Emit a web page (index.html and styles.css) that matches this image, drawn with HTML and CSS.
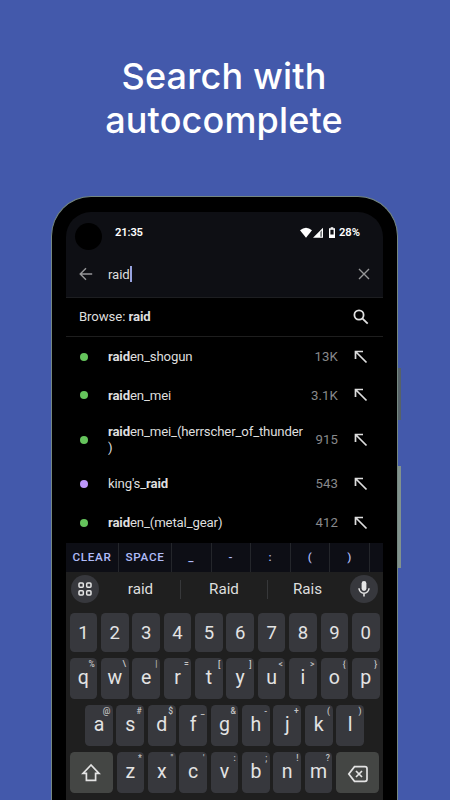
FILE: index.html
```html
<!DOCTYPE html>
<html lang="en">
<head>
<meta charset="utf-8">
<title>Search with autocomplete</title>
<link rel="stylesheet" href="styles.css">
</head>
<body>
<h1>Search with<br>autocomplete</h1>
<div class="phone">
  <i class="side power"></i><i class="side volume"></i>
  <main class="screen">
    <i class="camera"></i>
    <div class="status">
      <span class="time">21:35</span>
      <svg class="signals" width="38" height="12" viewBox="0 0 38 12"><path fill="#fff" d="M0 3.3Q6-1.7 12 3.3L6 10.7z"/><path fill="#fff" d="M13 10.7 23 .8v9.9z"/><path fill="#777a7d" d="M20.2 4.9 22 3.2v6.5h-1.8z"/><path fill="none" stroke="#fff" stroke-width="1.4" d="M29.7 2h4.6v8.3h-4.6z"/><path fill="#fff" d="M30.7.2h2.6v1.6h-2.6zM29.5 7.4h5v3h-5z"/></svg>
      <span class="battery">28%</span>
    </div>
    <div class="search">
      <svg class="back" width="14" height="14" viewBox="0 0 14 14"><path d="M13.2 7H1.3M7 1.2 1.2 7 7 12.8"/></svg>
      <span class="query">raid</span><i class="caret"></i>
      <svg class="clear" width="12" height="12" viewBox="0 0 12 12"><path d="m1 1 10 10M11 1 1 11"/></svg>
    </div>
    <div class="browse">
      <span>Browse: <b>raid</b></span>
      <svg width="16" height="16" viewBox="0 0 16 16"><circle cx="6" cy="6" r="4.6"/><path d="m9.3 9.3 5.4 5.4"/></svg>
    </div>
    <div class="results">
      <div class="row"><i class="dot"></i><span class="tag"><b>raid</b>en_shogun</span><span class="count">13K</span><svg class="arrow" width="14" height="14" viewBox="0 0 14 14"><path d="M1.5 9V1.5H9M1.5 1.5l11 11"/></svg></div>
      <div class="row"><i class="dot"></i><span class="tag"><b>raid</b>en_mei</span><span class="count">3.1K</span><svg class="arrow" width="14" height="14" viewBox="0 0 14 14"><path d="M1.5 9V1.5H9M1.5 1.5l11 11"/></svg></div>
      <div class="row tall"><i class="dot"></i><span class="tag"><b>raid</b>en_mei_(herrscher_of_thunder<br>)</span><span class="count">915</span><svg class="arrow" width="14" height="14" viewBox="0 0 14 14"><path d="M1.5 9V1.5H9M1.5 1.5l11 11"/></svg></div>
      <div class="row"><i class="dot purple"></i><span class="tag">king's_<b>raid</b></span><span class="count">543</span><svg class="arrow" width="14" height="14" viewBox="0 0 14 14"><path d="M1.5 9V1.5H9M1.5 1.5l11 11"/></svg></div>
      <div class="row"><i class="dot"></i><span class="tag"><b>raid</b>en_(metal_gear)</span><span class="count">412</span><svg class="arrow" width="14" height="14" viewBox="0 0 14 14"><path d="M1.5 9V1.5H9M1.5 1.5l11 11"/></svg></div>
    </div>
    <div class="tools"><span>CLEAR</span><span>SPACE</span><span>_</span><span>-</span><span>:</span><span>(</span><span>)</span><span></span></div>
    <div class="keyboard">
      <div class="suggest">
        <i class="round"><svg width="14" height="14" viewBox="0 0 14 14" fill="none" stroke="#e6e6e6" stroke-width="1.5"><rect x="1" y="1" width="4.3" height="4.3" rx="1"/><rect x="8.7" y="1" width="4.3" height="4.3" rx="1"/><rect x="1" y="8.7" width="4.3" height="4.3" rx="1"/><rect x="8.7" y="8.7" width="4.3" height="4.3" rx="1"/></svg></i>
        <span>raid</span><span>Raid</span><span>Rais</span>
        <i class="round"><svg width="14" height="18" viewBox="0 0 14 18"><rect x="4.6" y="1" width="4.8" height="10" rx="2.4" fill="#e6e6e6"/><path d="M2 8.3a5 5 0 0 0 10 0M7 13.3v3.2" fill="none" stroke="#e6e6e6" stroke-width="1.5"/></svg></i>
      </div>
      <div class="keys digits"><kbd>1</kbd><kbd>2</kbd><kbd>3</kbd><kbd>4</kbd><kbd>5</kbd><kbd>6</kbd><kbd>7</kbd><kbd>8</kbd><kbd>9</kbd><kbd>0</kbd></div>
      <div class="keys"><kbd>q<sup>%</sup></kbd><kbd>w<sup>\</sup></kbd><kbd>e<sup>|</sup></kbd><kbd>r<sup>=</sup></kbd><kbd>t<sup>[</sup></kbd><kbd>y<sup>]</sup></kbd><kbd>u<sup>&lt;</sup></kbd><kbd>i<sup>&gt;</sup></kbd><kbd>o<sup>{</sup></kbd><kbd>p<sup>}</sup></kbd></div>
      <div class="keys middle"><kbd>a<sup>@</sup></kbd><kbd>s<sup>#</sup></kbd><kbd>d<sup>$</sup></kbd><kbd>f<sup>_</sup></kbd><kbd>g<sup>&amp;</sup></kbd><kbd>h<sup>-</sup></kbd><kbd>j<sup>+</sup></kbd><kbd>k<sup>(</sup></kbd><kbd>l<sup>)</sup></kbd></div>
      <div class="keys">
        <kbd class="wide"><svg width="20" height="20" viewBox="0 0 20 20"><path d="M10 2 2 10.4h3.4v7h9.2v-7H18z"/></svg></kbd><kbd>z<sup>*</sup></kbd><kbd>x<sup>"</sup></kbd><kbd>c<sup>'</sup></kbd><kbd>v<sup>:</sup></kbd><kbd>b<sup>;</sup></kbd><kbd>n<sup>!</sup></kbd><kbd>m<sup>?</sup></kbd><kbd class="wide"><svg width="22" height="18" viewBox="0 0 22 18"><path d="M7.5 1.7H18a2 2 0 0 1 2 2v10.6a2 2 0 0 1-2 2H7.5L1.8 9zM9 6l6 6M15 6l-6 6"/></svg></kbd>
      </div>
      <div class="keys bottom"><kbd class="wide"></kbd><kbd></kbd><kbd></kbd><kbd class="spacebar"></kbd><kbd></kbd><kbd class="wide"></kbd></div>
    </div>
  </main>
</div>
</body>
</html>
```
FILE: styles.css
```css
* { box-sizing: border-box; }
html { height: 800px; overflow: hidden; }
body {
  margin: 0;
  height: 800px;
  overflow: hidden;
  background: #4359ab;
  font-family: Roboto, sans-serif;
  color: #dedede;
}
h1 {
  margin: 0;
  padding: 55px 2px 0 0;
  height: 195.5px;
  text-align: center;
  color: #fff;
  font: 460 36px/43.5px Inter, sans-serif;
  letter-spacing: .15px;
}
svg { display: block; fill: none; flex: none; }
.phone {
  position: relative;
  width: 347.5px;
  height: 604.5px;
  margin-left: 50.5px;
  padding: 15px 14.5px 0;
  background: #000;
  border: 1.4px solid #758780;
  border-bottom: 0;
  border-radius: 40px 40px 0 0;
}
.side { position: absolute; left: 346px; width: 3px; }
.power { top: 171px; height: 52px; background: #566268; }
.volume { top: 269px; height: 102px; background: #81928d; }
.screen {
  position: relative;
  height: 588.5px;
  width: 317px;
  background: #000;
  border-radius: 25px 25px 0 0;
  overflow: hidden;
}
.camera {
  position: absolute;
  left: 9px;
  top: 11px;
  width: 27px;
  height: 27px;
  border-radius: 50%;
  background: #000;
}
.status {
  display: flex;
  align-items: center;
  height: 42px;
  padding: 0 23px 0 49px;
  background: #0e0f14;
  color: #fff;
  font: 600 11.2px/14px Roboto, sans-serif;
}
.time { letter-spacing: -.15px; }
.signals { margin-left: auto; }
.battery { margin-left: 1px; }
.search {
  display: flex;
  align-items: center;
  height: 44px;
  padding: 0 13.5px 2px 12.5px;
  background: #0e0f14;
  border-bottom: 1px solid #1d1e21;
  font-size: 13.2px;
}
.back, .clear { stroke: #969799; stroke-width: 1.4; }
.query { margin-left: 15.5px; letter-spacing: -.1px; }
.caret { width: 2px; height: 16px; background: #98a3df; }
.clear { margin-left: auto; }
.browse {
  display: flex;
  align-items: center;
  justify-content: space-between;
  height: 39px;
  padding: 0 14.5px 0 13px;
  border-bottom: 1px solid #1e1e1e;
  font-size: 13.2px;
  letter-spacing: -.1px;
}
.browse svg { stroke: #e2e2e2; stroke-width: 1.8; }
.results { height: 206px; padding-top: .6px; }
.row {
  display: flex;
  align-items: center;
  height: 38.9px;
  padding: 0 15px 0 14px;
  font-size: 13.2px;
  line-height: 15.5px;
  letter-spacing: -.15px;
}
.row.tall { height: 49.6px; }
.dot { width: 8px; height: 8px; border-radius: 50%; background: #65c45c; }
.dot.purple { background: #bd97fa; }
.tag { margin-left: 20px; }
.count { margin-left: auto; color: #88898b; letter-spacing: .1px; }
.arrow { margin-left: 16px; stroke: #dedede; stroke-width: 1.7; }
.tools {
  display: grid;
  grid-template-columns: 53px 53px 39.6px 39.6px 39.6px 39.6px 39.6px 13px;
  height: 29px;
  background: #0d0e15;
  color: #b0bcf8;
  font: 500 11.7px/29px Roboto, sans-serif;
  letter-spacing: .7px;
  text-align: center;
}
.tools span { border-right: 1px solid #24262b; }
.tools span:last-child { border: 0; }
.keyboard { height: 240px; background: #1f1f1f; }
.suggest {
  display: grid;
  grid-template-columns: 28px 82px 87px 79px 28px;
  align-items: center;
  height: 35px;
  padding: 0 5px;
  font-size: 15.2px;
  text-align: center;
}
.suggest span { line-height: 19px; border-right: 1px solid #37383a; }
.suggest span:first-of-type { padding-left: 2px; }
.suggest span:nth-of-type(3) { border: 0; }
.suggest .round:last-child { margin-left: 3px; }
.round {
  display: flex;
  align-items: center;
  justify-content: center;
  width: 28px;
  height: 28px;
  border-radius: 50%;
  background: #37383d;
}
.keys {
  display: flex;
  gap: 3.7px;
  height: 41px;
  margin: 6.3px 3.5px 0;
}
.keys.digits { height: 38.5px; margin-top: 6.6px; }
.keys.middle { padding: 0 15.6px; }
kbd {
  position: relative;
  flex: 1 1 0;
  display: flex;
  align-items: center;
  justify-content: center;
  padding-bottom: 1px;
  border-radius: 4.5px;
  background: #37383d;
  color: #e3e3e3;
  font: 400 19.5px/22px Roboto, sans-serif;
}
.digits kbd { font-size: 18.5px; padding: 1px 0 0; }
kbd.wide { flex: 0 0 43.4px; background: #444644; padding: 0; }
kbd.wide:last-child { padding-top: 2px; }
kbd.spacebar { flex-grow: 5; }
.keys.bottom kbd { background: #2b2c2e; }
kbd svg { stroke: #e3e3e3; stroke-width: 1.7; }
kbd sup {
  position: absolute;
  top: 1px;
  right: 2.5px;
  color: #c5c5c5;
  font: 500 8.5px/10px Roboto, sans-serif;
}
```
